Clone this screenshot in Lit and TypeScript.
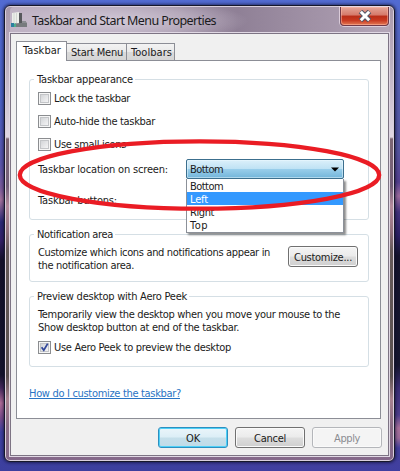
import { LitElement, html, css } from "lit";
import { customElement, property } from "lit/decorators.js";

@customElement("fit-text")
class FitText extends LitElement {
  @property({ type: Number }) w = 0;
  static styles = css`
    :host { display: inline-block; white-space: pre; text-align: left; flex: none; }
    span { display: inline-block; }
  `;
  render() { return html`<span><slot></slot></span>`; }
  firstUpdated() {
    const span = this.renderRoot.querySelector("span")!;
    const natural = span.getBoundingClientRect().width;
    const n = (this.textContent || "").length;
    this.style.width = this.w + "px";
    span.style.letterSpacing = (this.w - natural) / n + "px";
  }
}

@customElement("check-box")
class CheckBox extends LitElement {
  @property({ type: Boolean }) checked = false;
  static styles = css`
    :host { display: block; width: 13px; height: 13px; flex: none; }
    .box { box-sizing: border-box; width: 13px; height: 13px; border: 1px solid #8b8d90; padding: 1px; background: #f6f6f6; }
    .in { box-sizing: border-box; width: 9px; height: 9px; border: 1px solid #c3c5c8; background: linear-gradient(135deg, #d3d5d8, #f4f4f5); }
    svg { display: block; overflow: visible; }
  `;
  render() {
    return html`<div class="box"><div class="in">${this.checked
      ? html`<svg width="8" height="8" viewBox="0 0 8 8"><path d="M0.6 3.2 L2.8 6.2 L6.7 -0.4" fill="none" stroke="#33489a" stroke-width="1.8"/></svg>` : ""}</div></div>`;
  }
}

@customElement("app-root")
class AppRoot extends LitElement {
  static styles = css`
    :host { display: block; width: 400px; height: 471px; overflow: hidden; position: relative; box-sizing: border-box; padding: 5px 5px 9px 4px;
      font: 11px/13px "DejaVu Sans Condensed", "DejaVu Sans", sans-serif; font-stretch: condensed; color: #1b1b20;
      background:
        linear-gradient(180deg, #526bd2 0, #4a60c4 100px, #5a55ab 165px, #7b5b9c 188px, #a5739e 200px, #2b2a78 222px, #35206a 240px, #15112a 260px, #14142c 375px, #46295e 388px, #b06c98 403px, #7a4c8c 418px, #3f41a2 432px, #3c3f9e 471px) 0 0 / 200px 471px no-repeat,
        linear-gradient(180deg, #526bd2 0, #5260b4 60px, #54549e 150px, #54408e 182px, #9a6a9c 196px, #43337c 212px, #2c2064 235px, #15142c 256px, #17172f 365px, #3b2d74 388px, #4f3f8c 415px, #a8709a 428px, #9a6a98 438px, #44409c 448px, #403fa0 471px) 200px 0 / 200px 471px no-repeat; }
    * { box-sizing: border-box; }
    .window { height: 457px; border: 1px solid #17182b; border-radius: 6px; box-shadow: inset 0 0 0 1px #d9cfdc, 0 0 3px 1px rgba(10,10,40,.6); padding: 1px 5px 5px 5px;
      background: linear-gradient(180deg, #a899aa 0, #b4a5b8 30px, #bdb2c2 60px, #e0d7e2 131px, #7d6673 133px, #75607a 180px, #b48b9c 200px, #93727f 225px, #665a5a 245px, #5a5050 370px, #a8828f 393px, #8a6c86 420px, #84688a 457px); }
    .title { height: 26px; display: flex; padding-left: 1px; border-radius: 4px 4px 0 0;
      background: radial-gradient(ellipse 130px 22px at 108px 14px, rgba(224,216,229,.75), rgba(214,204,219,.45) 60%, transparent), linear-gradient(90deg, #bdb0c2, #8f8096 60%, #a596aa 85%, #b4a7b8); }
    .title svg { flex: none; }
    .title .icon { margin: 5px 4px 0 0; }
    .title fit-text { font: 12.5px/17px "Noto Sans", sans-serif; font-stretch: normal; margin-top: 5px; }
    .close { width: 49px; height: 19px; margin-left: auto; border: 1px solid #713947; border-top: 0; border-radius: 0 0 4px 4px; box-shadow: 0 0 0 1px rgba(235,220,232,.75), inset 0 0 0 1px rgba(255,190,170,.5); background: linear-gradient(#e5a698 0, #d5796a 45%, #b92d18 50%, #c93b22 75%, #e37a55); display: grid; place-items: center; }
    .client { height: 423px; border: 1px solid #7d7484; box-shadow: 0 0 0 1px #e0d8e4; background: #f0f0f0; padding: 7px 7px 0 5px; }
    .tabs { display: flex; height: 19px; align-items: flex-end; }
    .tab { height: 17px; border: 1px solid #8c8e96; border-bottom: 0; border-left: 0; background: linear-gradient(#f3f3f3, #e9e9e9 50%, #dadada 52%, #d5d5d5); padding: 2px 0 0 4px; white-space: nowrap; }
    .tab.on { height: 20px; margin-bottom: -1px; background: #fff; border-left: 1px solid #8c8e96; width: 51px; padding: 2px 0 0 6px; position: relative; }
    .start { width: 60px; }
    .tools { width: 48px; }
    .page { height: 359px; border: 1px solid #8c8e96; background: #fff; padding: 12px 11px 0 12px; }
    fieldset { display: block; margin: 0 0 8px; padding: 0 9px 0 8px; border: 1px solid #d5dfe5; border-radius: 3px; min-width: 0; }
    legend { padding: 0 2px 0 3px; margin-left: -4px; height: 13px; }
    .f1 { height: 147px; }
    .f2 { height: 54px; }
    .f3 { height: 77px; margin: 0; }
    .checks { display: grid; gap: 10px; padding-top: 6px; }
    .row { display: flex; align-items: center; gap: 3px; height: 13px; }
    .line { display: flex; align-items: center; height: 20px; margin-top: 8px; justify-content: space-between; padding-right: 15px; }
    .line > fit-text { padding-top: 1px; }
    .line.second { margin-top: 11px; }
    .combo { width: 158px; height: 20px; border: 1px solid #3c6f8e; border-radius: 2px; background: linear-gradient(#dcf0fa, #bfe2f4 48%, #98cdea 52%, #72b5da); box-shadow: inset 0 0 0 1px rgba(235,250,255,.5); display: flex; align-items: center; padding: 0 4px 0 3px; justify-content: space-between; }
    .anchor { position: relative; }
    .menu { position: absolute; z-index: 1; top: 20px; left: 0; width: 158px; height: 54px; border: 1px solid #8c9199; border-top: 0; background: #fff; box-shadow: 2px 2px 2px rgba(0,0,0,.45); }
    .menu div { height: 13px; padding-left: 3px; line-height: 15px; }
    .menu .sel { background: #3399ff; color: #fff; }
    .note { display: flex; justify-content: space-between; padding-top: 5px; }
    .btn { width: 70px; height: 21px; border: 1px solid #707070; border-radius: 3px; background: linear-gradient(#f4f4f4, #ebebeb 48%, #dddddd 52%, #cfcfcf); box-shadow: inset 0 0 0 1px #fafafa; display: flex; align-items: center; justify-content: center; padding-top: 1px; }
    .note .btn { margin-right: 1px; }
    .btn.ok { border-color: #2c8fc0; box-shadow: inset 0 0 0 1px #4ed0f7; background: linear-gradient(#eaf5fa, #dceef6 48%, #c5dfea 52%, #bfdbe8); }
    .btn.off { border-color: #b4b6ba; background: #f4f4f4; color: #8b8c91; }
    .peek { padding-top: 5px; }
    .peek .row { margin-top: 7px; }
    .text fit-text { display: block; }
    .foot { display: flex; justify-content: flex-end; gap: 7px; padding: 8px 0 0; margin-right: -1px; }
    .link { color: #2a74c4; border-bottom: 1px solid #2a74c4; height: 12px; width: 151px; margin-top: 20px; line-height: 14px; }
    .ring { position: absolute; left: 0; top: 0; z-index: 2; pointer-events: none; }
  `;
  render() {
    return html`
    <div class="window">
      <div class="title">
        <svg class="icon" width="17" height="17" viewBox="0 0 17 17"><path d="M1 1L8 0V11L1 12Z" fill="#eceeea"/><path d="M3 1V11M5.5 1V11" stroke="#c9ccc8" stroke-width=".7"/><path d="M8 1H11V12H8Z" fill="#56585c"/><path d="M4 11.500L16 10.500V15H4Z" fill="#777b7e"/><path d="M11 9H15V11H11Z" fill="#8b8d92"/><path d="M0 11H3V15H0Z" fill="#2c7fa0"/><path d="M3 11.500H5V15H3Z" fill="#4fae8b"/></svg>
        <fit-text w="184">Taskbar and Start Menu Properties</fit-text>
        <div class="close"><svg width="14" height="12" viewBox="0 0 14 12"><path d="M2.500 1.500L11.500 10.500M11.500 1.500L2.500 10.500" stroke="#535666" stroke-width="5"/><path d="M2.800 1.800L11.200 10.200M11.200 1.800L2.800 10.200" stroke="#fff" stroke-width="3"/></svg></div>
      </div>
      <div class="client">
        <div class="tabs">
          <div class="tab on"><fit-text w="38">Taskbar</fit-text></div>
          <div class="tab start"><fit-text w="52">Start Menu</fit-text></div>
          <div class="tab tools"><fit-text w="41">Toolbars</fit-text></div>
        </div>
        <div class="page">
          <fieldset class="f1">
            <legend><fit-text w="96">Taskbar appearance</fit-text></legend>
            <div class="checks">
              <div class="row"><check-box></check-box><fit-text w="76">Lock the taskbar</fit-text></div>
              <div class="row"><check-box></check-box><fit-text w="101">Auto-hide the taskbar</fit-text></div>
              <div class="row"><check-box></check-box><fit-text w="72">Use small icons</fit-text></div>
            </div>
            <div class="line">
              <fit-text w="130">Taskbar location on screen:</fit-text>
              <div class="anchor">
                <div class="combo"><fit-text w="33">Bottom</fit-text><svg width="8" height="5" viewBox="0 0 8 5"><path d="M0 0.500H8L4 4.500Z" fill="#000"/></svg></div>
                <div class="menu">
                  <div><fit-text w="33">Bottom</fit-text></div>
                  <div class="sel"><fit-text w="18">Left</fit-text></div>
                  <div><fit-text w="24">Right</fit-text></div>
                  <div><fit-text w="18">Top</fit-text></div>
                </div>
              </div>
            </div>
            <div class="line second"><fit-text w="79">Taskbar buttons:</fit-text></div>
          </fieldset>
          <fieldset class="f2">
            <legend><fit-text w="76">Notification area</fit-text></legend>
            <div class="note">
              <div class="text"><fit-text w="232">Customize which icons and notifications appear in</fit-text><fit-text w="96">the notification area.</fit-text></div>
              <div class="btn"><fit-text w="58">Customize...</fit-text></div>
            </div>
          </fieldset>
          <fieldset class="f3">
            <legend><fit-text w="150">Preview desktop with Aero Peek</fit-text></legend>
            <div class="peek text">
              <fit-text w="302">Temporarily view the desktop when you move your mouse to the</fit-text>
              <fit-text w="201">Show desktop button at end of the taskbar.</fit-text>
              <div class="row"><check-box checked></check-box><fit-text w="177">Use Aero Peek to preview the desktop</fit-text></div>
            </div>
          </fieldset>
          <div class="link"><fit-text w="152">How do I customize the taskbar?</fit-text></div>
        </div>
        <div class="foot">
          <div class="btn ok"><fit-text w="14">OK</fit-text></div>
          <div class="btn"><fit-text w="32">Cancel</fit-text></div>
          <div class="btn off"><fit-text w="26">Apply</fit-text></div>
        </div>
      </div>
    </div>
    <svg class="ring" width="400" height="471" viewBox="0 0 400 471"><ellipse cx="199.500" cy="175" rx="179.700" ry="33.700" fill="none" stroke="#ea1c24" stroke-width="4.300"/></svg>`;
  }
}
